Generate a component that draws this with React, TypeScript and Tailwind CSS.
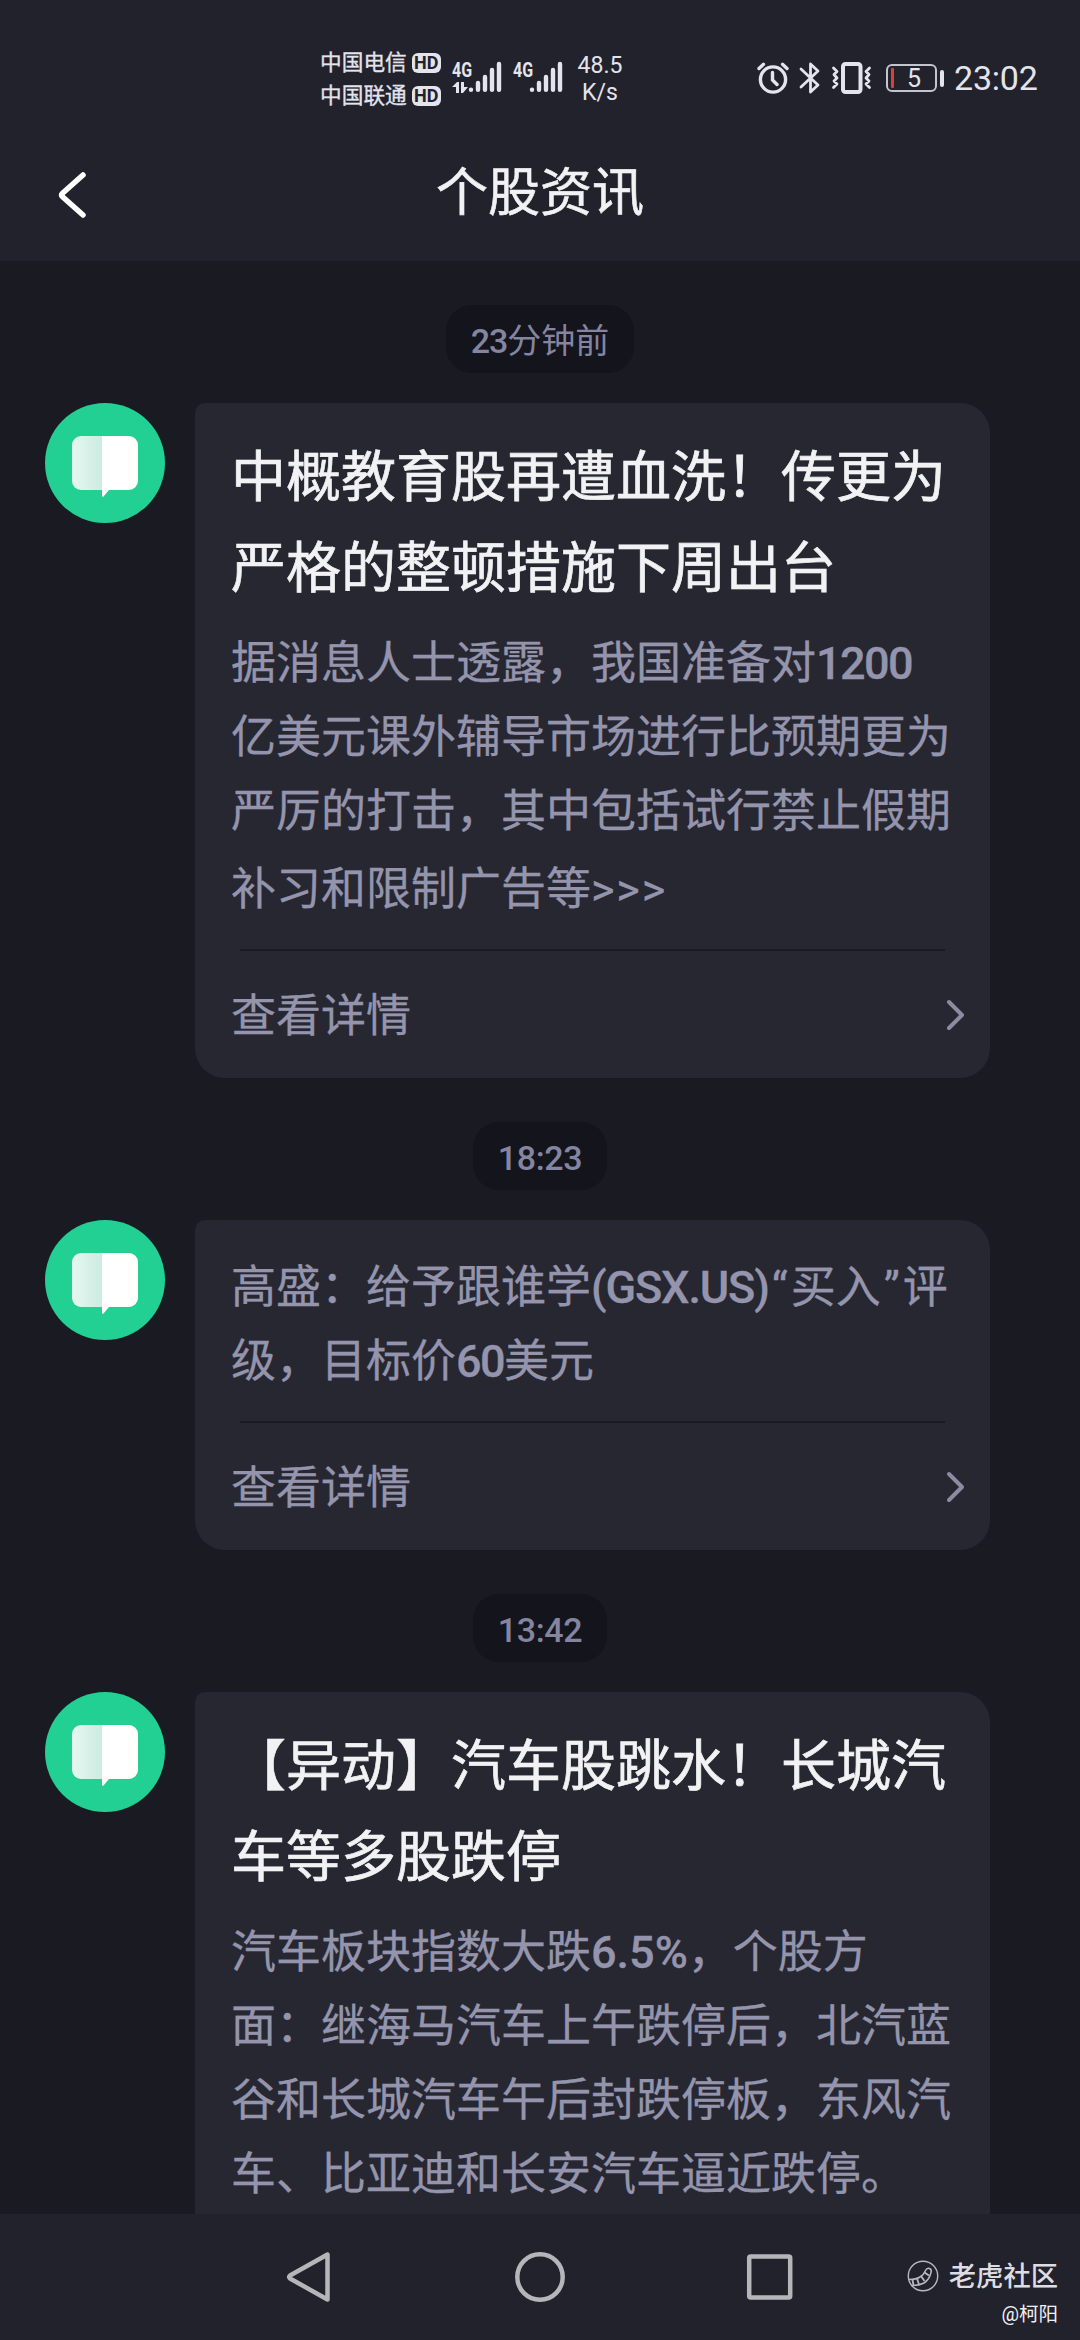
import { Fragment } from 'react';

interface INewsItem {
  id: string;
  time: string;
  title?: string[];
  body: string[];
  hasDetail: boolean;
}

const news: INewsItem[] = [
  {
    id: 'edu',
    time: '23分钟前',
    title: ['中概教育股再遭血洗！传更为', '严格的整顿措施下周出台'],
    body: [
      '据消息人士透露，我国准备对1200',
      '亿美元课外辅导市场进行比预期更为',
      '严厉的打击，其中包括试行禁止假期',
      '补习和限制广告等>>>',
    ],
    hasDetail: true,
  },
  {
    id: 'gsx',
    time: '18:23',
    body: ['高盛：给予跟谁学(GSX.US)“买入”评', '级，目标价60美元'],
    hasDetail: true,
  },
  {
    id: 'auto',
    time: '13:42',
    title: ['【异动】汽车股跳水！长城汽', '车等多股跌停'],
    body: [
      '汽车板块指数大跌6.5%，个股方',
      '面：继海马汽车上午跌停后，北汽蓝',
      '谷和长城汽车午后封跌停板，东风汽',
      '车、比亚迪和长安汽车逼近跌停。',
    ],
    hasDetail: false,
  },
];

function getRunStyle(run: string) {
  if (/^[“”]$/.test(run)) return 'px-[3px]';
  if (run.startsWith('>')) return 'tracking-[0.04em]';
  if (run.includes('%')) return 'font-medium tracking-normal';
  if (run.includes(':')) return 'font-medium tracking-[-0.01em]';
  if (run.includes('(')) return 'font-medium tracking-[-0.025em]';
  return 'font-medium tracking-[-0.035em]';
}

// Latin runs are heavier than the Chinese text and each kind has its own tracking
function MixedText({ text }: { text: string }) {
  return (
    <>
      {text.split(/([0-9A-Za-z.%:()]+|>+|[“”])/).map((part, i) =>
        i % 2 === 1 ? (
          <span key={i} className={getRunStyle(part)}>
            {part}
          </span>
        ) : (
          <Fragment key={i}>{part}</Fragment>
        )
      )}
    </>
  );
}

function Signal() {
  return (
    <svg width="34" height="32" viewBox="0 0 34 32" stroke="#e4e4ec" strokeWidth="4.4" strokeLinecap="round">
      <path d="M3 28.6v.2M10 22v6.8M17 16v12.8M24 9v19.8M31 3v25.8" />
    </svg>
  );
}

function Carrier({ name }: { name: string }) {
  return (
    <div className="flex h-[33px] items-center gap-[5px]">
      <span className="text-[21.7px] leading-none [-webkit-text-stroke:0.3px]">{name}</span>
      <span className="flex h-[20px] w-[29px] items-center justify-center rounded-[6px] bg-[#e4e4ec] text-[18px] leading-none font-bold text-[#22222c]">
        HD
      </span>
    </div>
  );
}

function StatusBar() {
  return (
    <div className="flex h-[130px] pt-[46px] pl-[320px] text-[#e4e4ec]">
      <div className="w-[132px]">
        <Carrier name="中国电信" />
        <Carrier name="中国联通" />
      </div>
      <div className="flex w-[61px] pt-[15px]">
        <div className="flex w-[16px] flex-col">
          <span className="h-[21px] origin-left scale-x-[0.8] text-[20px] leading-[18px] font-bold">4G</span>
          <svg width="16" height="12" viewBox="0 0 16 12" fill="#e4e4ec">
            <path d="M0 5 5 0h2v11H4V5zM9 0h3v5h4l-5 6H9z" />
          </svg>
        </div>
        <Signal />
      </div>
      <div className="flex w-[61px] pt-[15px]">
        <span className="w-[16px] origin-left scale-x-[0.8] text-[20px] leading-[18px] font-bold">4G</span>
        <Signal />
      </div>
      <div className="w-[52px] pt-[6px] text-center text-[23px] leading-[27px]">
        <div>48.5</div>
        <div>K/s</div>
      </div>
      <div className="ml-[131px] flex h-[64px] items-center">
        <svg width="32" height="34" viewBox="0 0 32 34" fill="none" stroke="#e4e4ec" strokeWidth="3.4" strokeLinecap="round">
          <circle cx="16" cy="18.5" r="12.6" />
          <path d="M15.500 11.500v7.500l4.500 4.500M2 7.500l4.500-4.200M30 7.500l-4.500-4.200" />
        </svg>
        <svg className="ml-[10px]" width="22" height="34" viewBox="0 0 22 34" fill="none" stroke="#e4e4ec" strokeWidth="2.8" strokeLinejoin="round" strokeLinecap="round">
          <path d="M2 8l17 16-7.500 7V3l7.500 7L2 26" />
        </svg>
        <svg className="ml-[10px]" width="42" height="34" viewBox="0 0 42 34" fill="none" stroke="#e4e4ec" strokeLinecap="round" strokeLinejoin="round">
          <rect x="12" y="3" width="17.500" height="28" rx="2.500" strokeWidth="4" />
          <path d="M2.500 7l3.500 3.500-3 3 3 3.500-3 3 3 3-3.500 3.500M38.500 7L35 10.500l3 3-3 3.500 3 3-3 3 3.500 3.500" strokeWidth="2.800" />
        </svg>
        <div className="ml-[13px] flex h-[28px] w-[51px] items-center rounded-[6px] border-2 border-[#c4c4cc] pl-[3px]">
          <span className="h-[20px] w-[3px] rounded-[1px] bg-[#d8403a]" />
          <span className="ml-[13px] text-[25px] leading-none">5</span>
        </div>
        <span className="ml-[3px] h-[17px] w-[4px] rounded-[2px] bg-[#e4e4ec]" />
        <span className="ml-[10px] text-[34px] leading-none tracking-[-0.2px]">23:02</span>
      </div>
    </div>
  );
}

function Header() {
  return (
    <header className="h-[261px] bg-[#22222c]">
      <StatusBar />
      <div className="flex h-[130px] items-start px-[56px] pt-[24px]">
        <svg className="mt-[16px]" width="32" height="50" viewBox="0 0 32 50" fill="none" stroke="#fff" strokeWidth="5.500" strokeLinecap="round" strokeLinejoin="round">
          <path d="M27 5L6.500 23.200q-2 1.800 0 3.600L27 45" />
        </svg>
        <h1 className="flex-1 pt-[2px] pr-[32px] text-center text-[52px] leading-[76px] text-[#f2f2f4] [-webkit-text-stroke:0.6px]">
          个股资讯
        </h1>
      </div>
    </header>
  );
}

function Avatar() {
  return (
    <svg className="shrink-0" width="120" height="120" viewBox="0 0 120 120">
      <defs>
        <linearGradient id="page" x1="0" x2="1">
          <stop offset="0" stopColor="#e6f7f1" />
          <stop offset="1" stopColor="#ccece0" />
        </linearGradient>
      </defs>
      <circle cx="60" cy="60" r="60" fill="#22d094" />
      <path d="M57 33H36a9 9 0 0 0-9 9v36a9 9 0 0 0 9 9h21z" fill="url(#page)" />
      <path d="M57 33h27a9 9 0 0 1 9 9v36a9 9 0 0 1-9 9H64l-5.500 6.500q-1.500 1-1.500-1z" fill="#fff" />
    </svg>
  );
}

function NewsCard({ item }: { item: INewsItem }) {
  return (
    <article className="w-[795px] rounded-[30px] rounded-tl-[10px] bg-[#272732] px-[36px] whitespace-nowrap">
      <div className={item.title ? 'pt-[29px]' : 'pt-[31px]'}>
        {item.title && (
          <h2 className="mb-[13px] text-[55px] leading-[91px] text-[#f2f2f4] [-webkit-text-stroke:0.7px]">
            {item.title.map((line) => (
              <div key={line}>{line}</div>
            ))}
          </h2>
        )}
        <div className="text-[45px] leading-[74px] text-[#9495ad] [-webkit-text-stroke:0.3px]">
          {item.body.map((line) => (
            <p key={line} className={line.endsWith('>>>') ? 'pt-[4px]' : ''}>
              <MixedText text={line} />
            </p>
          ))}
        </div>
      </div>
      {item.hasDetail ? (
        <>
          <div className="mx-[9px] mt-[22px] h-[2px] bg-[#1a1a23]" />
          <div className="flex h-[127px] items-center justify-between text-[45px] text-[#9495ad]">
            <span className="pt-[5px] [-webkit-text-stroke:0.3px]">查看详情</span>
            <svg className="-mr-[14px]" width="24" height="34" viewBox="0 0 24 34" fill="none" stroke="#8b8ca0" strokeWidth="4" strokeLinecap="round" strokeLinejoin="round">
              <path d="M5 4l13 13L5 30" />
            </svg>
          </div>
        </>
      ) : (
        <div className="h-[80px]" />
      )}
    </article>
  );
}

function NavBar() {
  return (
    <nav className="relative flex h-[126px] shrink-0 bg-[#22222c] pt-[35px] pl-[283px]">
      <svg width="56" height="56" viewBox="0 0 56 56" fill="none" stroke="#b6b6ba" strokeWidth="4.500" strokeLinejoin="round">
        <path d="M44.500 5.500v45L7 29.500q-1.500-1.500 0-3z" />
      </svg>
      <svg className="ml-[173px]" width="56" height="56" viewBox="0 0 56 56" fill="none" stroke="#b6b6ba" strokeWidth="4.500">
        <circle cx="28" cy="28" r="22.700" />
      </svg>
      <svg className="ml-[173px]" width="56" height="56" viewBox="0 0 56 56" fill="none" stroke="#b6b6ba" strokeWidth="4.500">
        <rect x="8.200" y="7.500" width="41" height="41" rx="1.500" />
      </svg>
      <div className="absolute top-[43px] right-[22px] text-right">
        <div className="flex h-[38px] items-center gap-[10px]">
          <svg width="32" height="32" viewBox="0 0 32 32" fill="none" stroke="#b8b8c0">
            <circle cx="16" cy="16" r="14.700" strokeWidth="1.400" />
            <path d="M2 19.500q7 0 11-2.500t5.500-6.500q1.500-3 4-2t1.500 4q-1.500 7-7 10.500-5.500 3-13 2.500" strokeWidth="1.500" />
            <path d="M5.500 19.500l1 6M10 18.500l2 6M14 16l3.500 5M17.500 12.500l4.500 3" strokeWidth="1.800" />
          </svg>
          <span className="pt-[3px] text-[27.3px] leading-none font-medium text-[#dcdce2]">老虎社区</span>
        </div>
        <div className="pt-[8px] text-[19.500px] leading-[24px] text-[#f0f0f4]">@柯阳</div>
      </div>
    </nav>
  );
}

export default function App() {
  return (
    <div className="flex h-[2340px] w-[1080px] flex-col overflow-hidden bg-[#1a1a23] font-[Roboto,'Noto_Sans_CJK_SC',sans-serif]">
      <Header />
      <main className="min-h-0 flex-1 overflow-hidden">
        {news.map((item) => (
          <section key={item.id} className="pt-[44px]">
            <div className="flex justify-center">
              <span className="h-[68px] rounded-[26px] bg-[#14141c] px-[25px] pt-[2px] text-[34px] leading-[68px] text-[#8485a0]">
                <MixedText text={item.time} />
              </span>
            </div>
            <div className="mt-[30px] flex items-start gap-[30px] pl-[45px]">
              <Avatar />
              <NewsCard item={item} />
            </div>
          </section>
        ))}
      </main>
      <NavBar />
    </div>
  );
}
